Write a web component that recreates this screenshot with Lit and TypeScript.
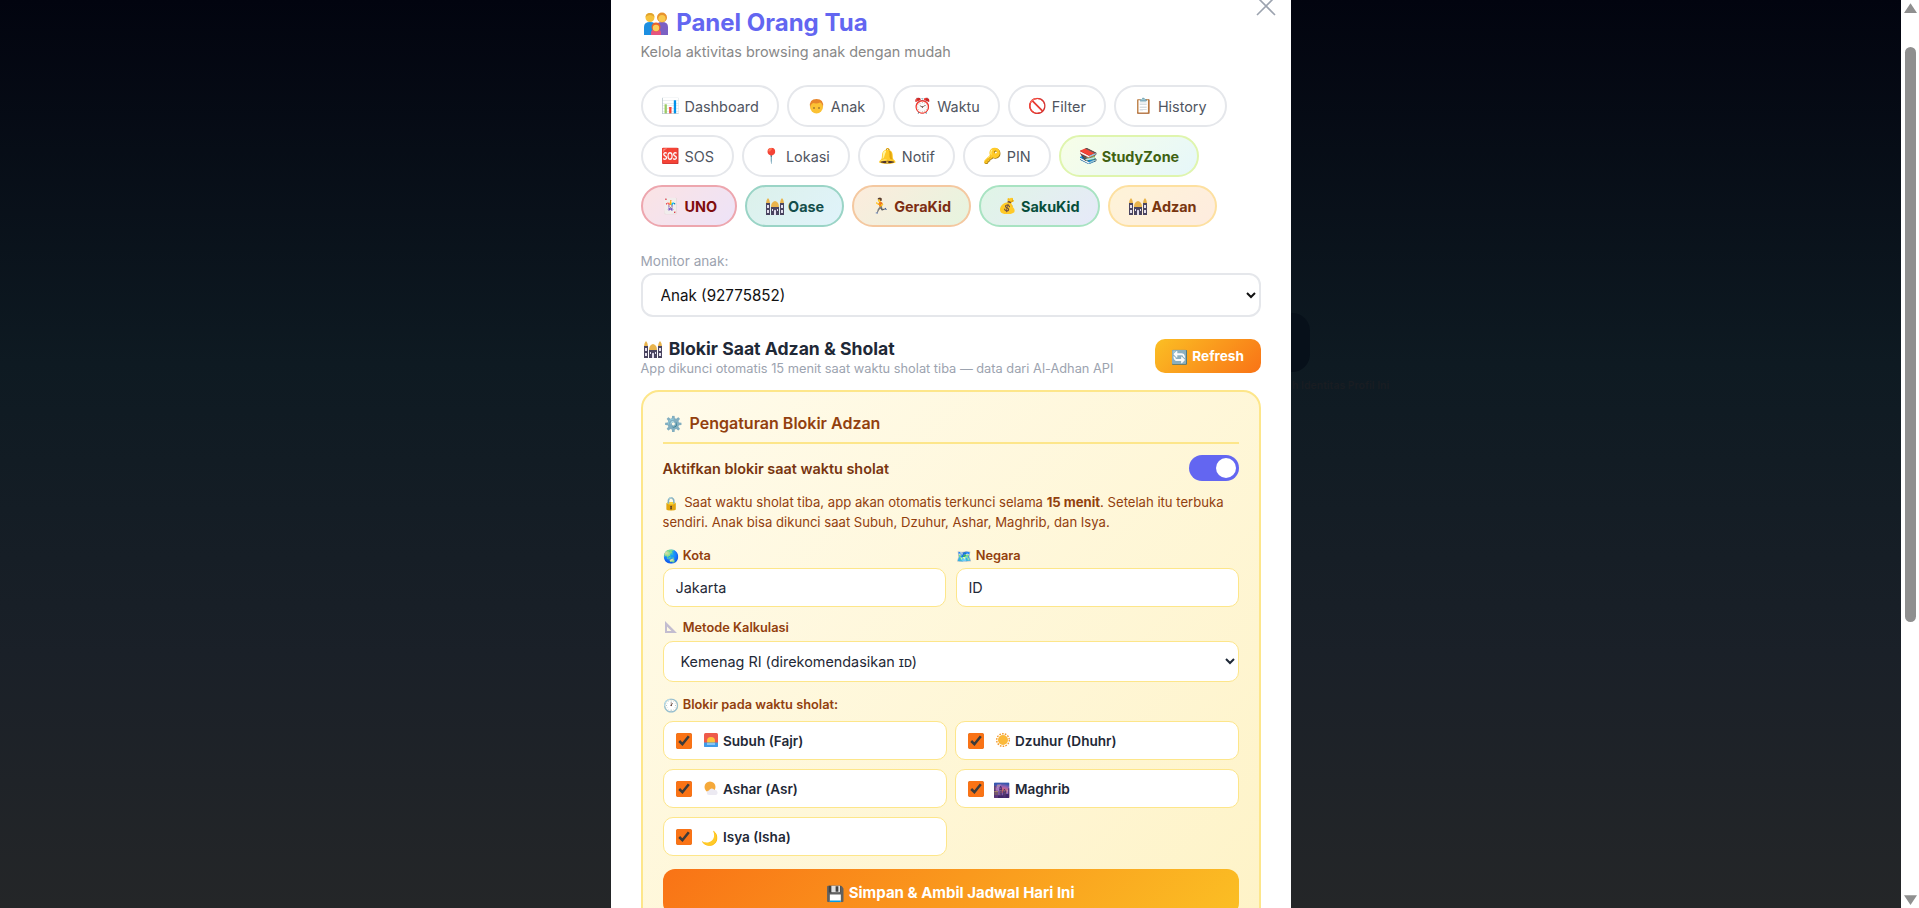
import { LitElement, html, css } from "lit";
import { customElement } from "lit/decorators.js";

// glyphs where the installed emoji font differs too much from the reference
const icons: Record<string, unknown> = {
  family: html`<svg viewBox="0 0 24 23" width="24" height="23">
    <path d="M0 23V15q0-5 6-5t6 5v8Z" fill="#1d8fe1" />
    <path d="M12 23V15q0-5 6-5t6 5v8Z" fill="#7b61c4" />
    <circle cx="6" cy="5.5" r="4.5" fill="#f7c23c" />
    <path d="M1.5 5Q2 1 6 1t4.5 4Q8 3 6 3T1.5 5Z" fill="#e0a32e" />
    <circle cx="18" cy="5.5" r="5" fill="#e8932c" />
    <circle cx="18" cy="6.5" r="3.6" fill="#f9c94e" />
    <path d="M7 23v-2q0-4 5-4t5 4v2Z" fill="#e5547f" />
    <circle cx="12" cy="15" r="4.5" fill="#e8652c" />
    <circle cx="12" cy="16" r="3.2" fill="#fbcf5c" />
  </svg>`,
  mosque: html`<svg viewBox="0 0 18 17" width="18" height="17">
    <path d="M0 17V5h4v12ZM14 17V5h4v12ZM5 17V9h8v8Z" fill="#4a4560" />
    <path d="M0 5q0-3 2-5 2 2 2 5ZM14 5q0-3 2-5 2 2 2 5Z" fill="#e9b44c" />
    <path d="M5 9q0-5 4-6 4 1 4 6Z" fill="#e9b44c" />
    <path d="M1 7h2v3H1ZM15 7h2v3h-2ZM1 12h2v3H1ZM15 12h2v3h-2ZM8 12.500q1-1.500 2 0V17H8ZM6 11h1v2H6ZM11 11h1v2h-1Z" fill="#e4e0ee" />
  </svg>`,
  boy: html`<svg viewBox="0 0 15 15" width="15" height="15">
    <circle cx="7.500" cy="8" r="6.500" fill="#fbc234" />
    <path d="M1 8Q0 0 7.500 0T14 8q-1-4-3-4.500-3 1.500-7 .5Q2 5 1 8Z" fill="#e8862a" />
    <circle cx="5" cy="9" r=".8" fill="#6b4a2a" /><circle cx="10" cy="9" r=".8" fill="#6b4a2a" />
  </svg>`,
  ruler: html`<svg viewBox="0 0 12 12" width="12" height="12">
    <path fill-rule="evenodd" d="M0 0 12 12H0ZM2 5.500V10h4.500Z" fill="#c3bdd0" />
  </svg>`,
  sunrise: html`<svg viewBox="0 0 14 14" width="14" height="14">
    <rect width="14" height="14" rx="1.500" fill="#ee5a4a" />
    <circle cx="7" cy="8" r="4" fill="#fcc23c" />
    <path d="M0 9.500h14V13a1 1 0 0 1-1 1H1a1 1 0 0 1-1-1Z" fill="#3f9be8" />
    <path d="M3 11h8" stroke="#d8ecfb" />
  </svg>`,
  sun: html`<svg viewBox="0 0 14 14" width="14" height="14">
    <circle cx="7" cy="7" r="6.300" fill="none" stroke="#f29a2e" stroke-width="1.400" stroke-dasharray="1.600 1.200" />
    <circle cx="7" cy="7" r="5" fill="#fbb93a" />
  </svg>`,
  cloudsun: html`<svg viewBox="0 0 14 14" width="14" height="14">
    <circle cx="6" cy="6" r="5.500" fill="#f5a93a" />
    <path d="M5 14a2.200 2.200 0 0 1 0-4.400 3 3 0 0 1 5.500-.6 2.500 2.500 0 0 1 1 5Z" fill="#eceaf2" />
  </svg>`,
};

const navPlain = [
  ["📊", "Dashboard"], ["boy", "Anak"], ["⏰", "Waktu"], ["🚫", "Filter"], ["📋", "History"],
  ["🆘", "SOS"], ["📍", "Lokasi"], ["🔔", "Notif"], ["🔑", "PIN"],
];

const navColored = [
  ["📚", "StudyZone", "study"], ["🃏", "UNO", "uno"], ["mosque", "Oase", "oase"],
  ["🏃", "GeraKid", "gera"], ["💰", "SakuKid", "saku"], ["mosque", "Adzan", "adzan"],
];

const prayers = [
  ["sunrise", "Subuh (Fajr)"], ["sun", "Dzuhur (Dhuhr)"], ["cloudsun", "Ashar (Asr)"],
  ["🌆", "Maghrib"], ["🌙", "Isya (Isha)"],
];

const emo = (i: string) => html`<span class="emo">${icons[i] ?? i}</span>`;

@customElement("app-root")
export class AppRoot extends LitElement {
  static styles = css`
    :host {
      display: block;
      position: relative;
      height: 100vh;
      overflow: hidden;
      background: linear-gradient(180deg, #02040f 0%, #0e1a22 40%, #1a2028 72%, #242628 100%);
      font-family: Inter, sans-serif;
    }
    .behind { position: absolute; left: 1240px; top: 313px; width: 70px; height: 59px; border-radius: 18px; background: #07101a; }
    .behind-text { position: absolute; left: 1292px; top: 379px; font-size: 10.5px; font-weight: 600; white-space: nowrap; color: #191d22; }
    .stage { position: relative; display: flex; justify-content: center; height: 100%; padding-right: 18px; }
    .modal { position: relative; width: 680px; box-sizing: border-box; padding: 8px 30px 0; background: #fff; overflow: hidden; }
    .close { position: absolute; right: 15px; top: -4px; width: 20px; height: 20px; }
    .emo { font-family: "Noto Color Emoji", sans-serif; font-weight: 400; display: inline-flex; justify-content: center; align-items: center; line-height: 1; vertical-align: -1px; }

    h1 { margin: 0; font-size: 24px; line-height: 29px; font-weight: 700; color: #6366f1; }
    h1 .emo { width: 30px; vertical-align: -4px; }
    .sub { margin: 6px 0 0; font-size: 14.4px; line-height: 17px; color: #888; }

    .nav { display: flex; flex-wrap: wrap; gap: 8px; margin-top: 25px; }
    .pill { box-sizing: border-box; height: 42px; padding: 0 18px; display: flex; align-items: center; gap: 4px; border: 2px solid #e5e7eb; border-radius: 21px; background: #fff; font-size: 14.4px; color: #50555f; white-space: pre; }
    .pill .emo { width: 20px; font-size: 15px; }
    .study, .uno, .oase, .gera, .saku, .adzan { font-weight: 700; }
    .pill.study .emo, .pill.oase .emo { width: 19px; }
    .pill.gera .emo, .pill.saku .emo { width: 18px; }
    .study { border-color: #dff5ae; background: linear-gradient(135deg, #f7fee7, #e6f7fa); color: #3f6212; }
    .uno { border-color: #eda6ae; background: linear-gradient(135deg, #fbe3e4, #ede3f8); color: #7f0d0d; }
    .oase { border-color: #9ad4c6; background: linear-gradient(135deg, #dcf1ea, #e0f3fb); color: #134e4a; }
    .gera { border-color: #f4c8a0; background: linear-gradient(135deg, #fcecdc, #e6f4df); color: #7c2d12; }
    .saku { border-color: #a8e3c2; background: linear-gradient(135deg, #e0f5e6, #e6e9f9); color: #064e3b; }
    .adzan { border-color: #fde0a0; background: linear-gradient(135deg, #fef3d7, #feecdf); color: #78350f; }

    .monitor { margin-top: 26px; font-size: 13.6px; line-height: 16px; color: #9ca3af; }
    .child { display: block; box-sizing: border-box; width: 100%; height: 44px; margin-top: 4px; padding: 0 14px; border: 2px solid #e5e7eb; border-radius: 12px; background: #fff; font: 15.2px Inter, sans-serif; color: #111; }

    .head { display: flex; justify-content: space-between; align-items: flex-start; margin-top: 20px; }
    h2 { margin: 0; font-size: 17.6px; line-height: 24px; font-weight: 700; color: #1f2937; }
    h2 .emo { width: 24px; vertical-align: -3px; }
    .head p { margin: 0; font-size: 12.8px; line-height: 15px; color: #9ca3af; }
    .refresh { box-sizing: border-box; width: 106px; height: 34px; margin-top: 2px; padding: 0; border: 0; border-radius: 10px; background: linear-gradient(135deg, #fbbf24, #f97316); color: #fff; font: 700 13.6px Inter, sans-serif; }
    .refresh .emo { width: 18px; }

    .card { margin-top: 14px; padding: 21px 20px 20px; border: 2px solid #fde68a; border-radius: 18px; background: linear-gradient(135deg, #fffbeb, #fef3c7); }
    h3 { margin: 0; padding-bottom: 9px; border-bottom: 2px solid #fde68a; font-size: 16px; line-height: 20px; font-weight: 600; color: #92400e; }
    h3 .emo { width: 23px; font-size: 15px; vertical-align: 0; }
    .enable { display: flex; justify-content: space-between; align-items: center; margin-top: 11px; font-size: 14.4px; font-weight: 600; color: #78350f; }
    .toggle { position: relative; width: 50px; height: 26px; border-radius: 13px; background: #6366f1; }
    .toggle::after { content: ""; position: absolute; right: 3px; top: 3px; width: 20px; height: 20px; border-radius: 50%; background: #fff; }
    .note { margin: 11px 0 0; font-size: 13.12px; line-height: 20px; color: #92400e; }
    .note .emo { width: 18px; font-size: 13px; }
    .note strong { font-weight: 700; }

    .fields { display: grid; grid-template-columns: 1fr 1fr; gap: 10px; margin-top: 16px; }
    label, .lab { display: block; font-size: 12.8px; line-height: 15px; font-weight: 600; color: #92400e; }
    label .emo, .lab .emo { width: 17px; font-size: 13px; }
    input.text { display: block; box-sizing: border-box; width: 100%; height: 39px; margin-top: 5px; padding: 0 12px; border: 1.5px solid #fde68a; border-radius: 10px; background: #fff; font: 14.4px Inter, sans-serif; color: #1f2937; }
    .method { display: block; box-sizing: border-box; width: 100%; height: 41px; margin-top: 6px; padding: 0 13px; border: 1.5px solid #fde68a; border-radius: 10px; background: #fff; font: 14.4px Inter, sans-serif; color: #1f2937; }
    .mt { margin-top: 13px; }
    .lab.mt { margin-top: 15px; }
    .checks { display: grid; grid-template-columns: 1fr 1fr; gap: 9px 8px; margin-top: 9px; }
    .check { box-sizing: border-box; height: 39px; padding: 0 12px; display: flex; align-items: center; gap: 10px; border: 1.5px solid #fde68a; border-radius: 10px; background: #fff; font-size: 13.6px; font-weight: 600; color: #1f2937; white-space: pre; }
    .check input { width: 16px; height: 16px; margin: 0; accent-color: #f97316; }
    .check .emo { width: 18px; font-size: 14px; }
    .save { display: block; width: 100%; height: 46px; margin-top: 13px; border: 0; border-radius: 12px; background: linear-gradient(135deg, #f97316, #fbbf24); color: #fff; font: 700 15px Inter, sans-serif; }

    .bar { position: absolute; right: 0; top: 0; bottom: 0; width: 18px; background: #fff; }
    .thumb { position: absolute; left: 4px; right: 3px; top: 47px; height: 575px; border-radius: 6px; background: #8f8f8f; }
    .up, .down { position: absolute; left: 3px; width: 13px; height: 10px; }
    .up { top: 3px; }
    .down { bottom: 3px; }
  `;

  render() {
    return html`
      <div class="behind"></div>
      <div class="behind-text">h Identitas Profil Ini</div>
      <div class="stage">
        <div class="modal">
          <svg class="close" viewBox="0 0 20 20" fill="none" stroke="#9ca3af" stroke-width="1.6"><path d="M1 1 19 19M19 1 1 19" /></svg>
          <h1>${emo("family")} Panel Orang Tua</h1>
          <p class="sub">Kelola aktivitas browsing anak dengan mudah</p>
          <div class="nav">
            ${navPlain.map(([i, t]) => html`<div class="pill">${emo(i)}<span>${t}</span></div>`)}
            ${navColored.map(([i, t, c]) => html`<div class="pill ${c}">${emo(i)}<span>${t}</span></div>`)}
          </div>
          <div class="monitor">Monitor anak:</div>
          <select class="child"><option>Anak (92775852)</option></select>
          <div class="head">
            <div>
              <h2>${emo("mosque")} Blokir Saat Adzan &amp; Sholat</h2>
              <p>App dikunci otomatis 15 menit saat waktu sholat tiba — data dari Al-Adhan API</p>
            </div>
            <button class="refresh">${emo("🔄")} Refresh</button>
          </div>
          <div class="card">
            <h3>${emo("⚙️")} Pengaturan Blokir Adzan</h3>
            <div class="enable">Aktifkan blokir saat waktu sholat <div class="toggle"></div></div>
            <p class="note">${emo("🔒")} Saat waktu sholat tiba, app akan otomatis terkunci selama <strong>15 menit</strong>. Setelah itu terbuka sendiri. Anak bisa dikunci saat Subuh, Dzuhur, Ashar, Maghrib, dan Isya.</p>
            <div class="fields">
              <div><label>${emo("🌏")} Kota</label><input class="text" value="Jakarta" /></div>
              <div><label>${emo("🗺️")} Negara</label><input class="text" value="ID" /></div>
            </div>
            <label class="mt">${emo("ruler")} Metode Kalkulasi</label>
            <select class="method"><option>Kemenag RI (direkomendasikan ɪᴅ)</option></select>
            <div class="lab mt">${emo("🕐")} Blokir pada waktu sholat:</div>
            <div class="checks">
              ${prayers.map(([i, t]) => html`<div class="check"><input type="checkbox" checked /><span>${emo(i)} ${t}</span></div>`)}
            </div>
            <button class="save">${emo("💾")} Simpan &amp; Ambil Jadwal Hari Ini</button>
          </div>
        </div>
      </div>
      <div class="bar">
        <svg class="up" viewBox="0 0 12 9"><path d="M6 0 12 9H0Z" fill="#8f8f8f" /></svg>
        <div class="thumb"></div>
        <svg class="down" viewBox="0 0 12 9"><path d="M6 9 12 0H0Z" fill="#8f8f8f" /></svg>
      </div>
    `;
  }
}
